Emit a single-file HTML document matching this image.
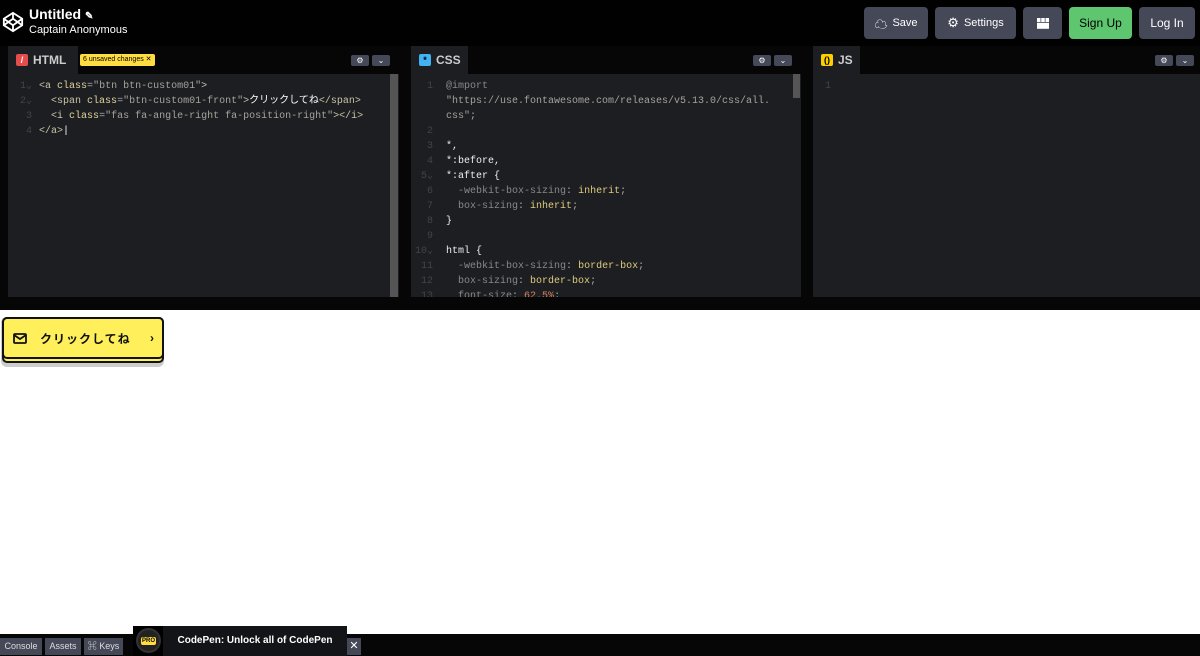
<!DOCTYPE html>
<html><head><meta charset="utf-8"><style>
*{box-sizing:border-box;margin:0;padding:0}
body{width:1200px;height:656px;overflow:hidden;background:#fff;font-family:"Liberation Sans","Noto Sans CJK JP",sans-serif;position:relative}
.hdr{position:absolute;left:0;top:0;width:1200px;height:46px;background:#010101}
.btn{position:absolute;top:7px;height:32px;border-radius:4px;background:#444857;color:#fff;font-size:12px;display:flex;align-items:center;justify-content:center;gap:5px}
.ed{position:absolute;top:46px;height:251px;background:#1d1e22;overflow:hidden}
.tabs{height:28px;background:#060606;position:relative}
.tab{position:absolute;left:0;top:0;height:28px;background:#1d1e22;color:#ccc;font-weight:bold;font-size:12px;display:flex;align-items:center;padding-left:8px;gap:5px}
.ic{width:12px;height:12px;border-radius:2px;display:inline-block;font-size:9px;text-align:center;line-height:12px;color:#000}
.ctl{position:absolute;top:9px;height:11px;width:18px;background:#444857;border-radius:2px;color:#fff;font-size:8px;text-align:center;line-height:11px}
pre{font-family:"Liberation Mono","Noto Sans CJK JP",monospace;font-size:10px;line-height:15px;color:#aaa;position:absolute;top:4px;white-space:pre}
.ln{color:#444;position:absolute;left:0;top:4px;text-align:right;font-family:"Liberation Mono",monospace;font-size:10px;line-height:15px;white-space:pre}
.t{color:#c9c4a4}.a{color:#e0d59b}.s{color:#a5a39b}.w{color:#fff}.k{color:#ddca7e}.p{color:#eee}.o{color:#d8815a}.g{color:#888}
</style></head><body>
<div class="hdr">
<svg style="position:absolute;left:2px;top:11px" width="22" height="22" viewBox="0 0 24 24" fill="none" stroke="#fff" stroke-width="2"><path d="M12 2L22 8.5V15.5L12 22L2 15.5V8.5Z M12 2V8.5M12 15.5V22M2 8.5L12 15.5L22 8.5M2 15.5L12 8.5L22 15.5"/></svg>
<div style="position:absolute;left:29px;top:6px;color:#fff;font-size:14px;font-weight:bold">Untitled <span style="font-size:10px">✎</span></div>
<div style="position:absolute;left:29px;top:24px;color:#fff;font-size:11px">Captain Anonymous</div>
<div class="btn" style="left:864px;width:64px;font-size:11px"><span style="font-size:13px">☁</span>Save</div>
<div class="btn" style="left:935px;width:81px;font-size:11px"><span style="font-size:13px">⚙</span>Settings</div>
<div class="btn" style="left:1023px;width:39px"><svg width="12" height="11" viewBox="0 0 12 11" fill="#fff"><rect x="0" y="0" width="3.5" height="4"/><rect x="4.25" y="0" width="3.5" height="4"/><rect x="8.5" y="0" width="3.5" height="4"/><rect x="0" y="4.8" width="12" height="6"/></svg></div>
<div class="btn" style="left:1069px;width:63px;background:#5dc66f;color:#000">Sign Up</div>
<div class="btn" style="left:1139px;width:56px">Log In</div>
</div>
<div style="position:absolute;left:0;top:46px;width:1200px;height:264px;background:#060606"></div>
<div class="ed" style="left:8px;width:391px">
<div class="tabs"><div class="tab" style="width:70px"><span class="ic" style="background:#e54d4d;color:#fff">/</span>HTML</div>
<div style="position:absolute;left:72px;top:8px;height:12px;background:#ffdd40;border-radius:2px;font-size:7px;padding:0 3px;line-height:12px;color:#000">6 unsaved changes ✕</div>
<div class="ctl" style="left:343px">⚙</div><div class="ctl" style="left:364px">⌄</div></div>
<div class="ln" style="width:24px;top:33px">1⌄
2⌄
3
4</div>
<pre style="left:31px;top:33px"><span class="t">&lt;a</span> <span class="a">class</span>=<span class="s">"btn btn-custom01"</span><span class="t">&gt;</span>
  <span class="t">&lt;span</span> <span class="a">class</span>=<span class="s">"btn-custom01-front"</span><span class="t">&gt;</span><span class="w">クリックしてね</span><span class="t">&lt;/span&gt;</span>
  <span class="t">&lt;i</span> <span class="a">class</span>=<span class="s">"fas fa-angle-right fa-position-right"</span><span class="t">&gt;&lt;/i&gt;</span>
<span class="t">&lt;/a&gt;</span><span class="w">|</span></pre>
<div style="position:absolute;left:382px;top:28px;width:8px;height:223px;background:#555"></div>
</div>
<div class="ed" style="left:411px;width:390px">
<div class="tabs"><div class="tab" style="width:57px"><span class="ic" style="background:#41b2f2">*</span>CSS</div>
<div class="ctl" style="left:342px">⚙</div><div class="ctl" style="left:363px">⌄</div></div>
<div class="ln" style="width:22px;top:33px">1


2
3
4
5⌄
6
7
8
9
10⌄
11
12
13</div>
<pre style="left:35px;top:33px"><span class="g">@import</span>
<span class="s">"https://use.fontawesome.com/releases/v5.13.0/css/all.</span>
<span class="s">css"</span>;

<span class="p">*,</span>
<span class="p">*:before,</span>
<span class="p">*:after {</span>
  <span class="g">-webkit-box-sizing</span>: <span class="k">inherit</span>;
  <span class="g">box-sizing</span>: <span class="k">inherit</span>;
<span class="p">}</span>

<span class="p">html {</span>
  <span class="g">-webkit-box-sizing</span>: <span class="k">border-box</span>;
  <span class="g">box-sizing</span>: <span class="k">border-box</span>;
  <span class="g">font-size</span>: <span class="o">62.5%</span>;</pre>
<div style="position:absolute;left:382px;top:28px;width:7px;height:24px;background:#555"></div>
</div>
<div class="ed" style="left:813px;width:387px">
<div class="tabs"><div class="tab" style="width:47px"><span class="ic" style="background:#fcd000">()</span>JS</div>
<div class="ctl" style="left:342px">⚙</div><div class="ctl" style="left:363px">⌄</div></div>
<div class="ln" style="width:18px;top:33px">1</div>
</div>
<div style="position:absolute;left:1px;top:317px;width:163px;height:50px;background:#ccc;border-radius:6px"></div>
<div style="position:absolute;left:2px;top:317px;width:162px;height:46px;background:#ffef5a;border:2px solid #111;border-radius:5px"></div>
<div style="position:absolute;left:2px;top:317px;width:162px;height:42px;background:#ffef5a;border:2px solid #111;border-radius:5px;display:flex;align-items:center;font-weight:bold;font-size:12px;color:#111">
<svg style="margin-left:9px" width="14" height="11" viewBox="0 0 14 11" fill="none" stroke="#111" stroke-width="1.8"><rect x="1" y="1" width="12" height="9" rx="1"/><path d="M1 2L7 6L13 2"/></svg>
<span style="margin-left:13px;letter-spacing:1px">クリックしてね</span><span style="margin-left:auto;margin-right:8px">›</span></div>
<div style="position:absolute;left:0;top:634px;width:1200px;height:22px;background:#060606"></div>
<div style="position:absolute;left:0;top:638px;width:42px;height:17px;background:#444857;color:#ddd;font-size:9px;text-align:center;line-height:17px">Console</div>
<div style="position:absolute;left:45px;top:638px;width:36px;height:17px;background:#444857;color:#ddd;font-size:9px;text-align:center;line-height:17px">Assets</div>
<div style="position:absolute;left:84px;top:638px;width:39px;height:17px;background:#444857;color:#ddd;font-size:9px;text-align:center;line-height:17px">⌘ Keys</div>
<div style="position:absolute;left:133px;top:626px;width:214px;height:30px;background:#000"></div>
<div style="position:absolute;left:136px;top:628px;width:25px;height:25px;border-radius:50%;background:#222;border:2px solid #333"><div style="margin:7px 3px;background:#ffdd40;height:8px;border-radius:2px;font-size:6px;font-weight:bold;text-align:center;line-height:8px">PRO</div></div>
<div style="position:absolute;left:163px;top:626px;width:184px;height:30px;background:#131417;color:#fff;font-size:10px;font-weight:bold;text-align:center;line-height:30px">CodePen: Unlock all of CodePen</div>
<div style="position:absolute;left:347px;top:638px;width:14px;height:17px;background:#444857;color:#fff;font-size:11px;text-align:center;line-height:17px">✕</div>
</body></html>
